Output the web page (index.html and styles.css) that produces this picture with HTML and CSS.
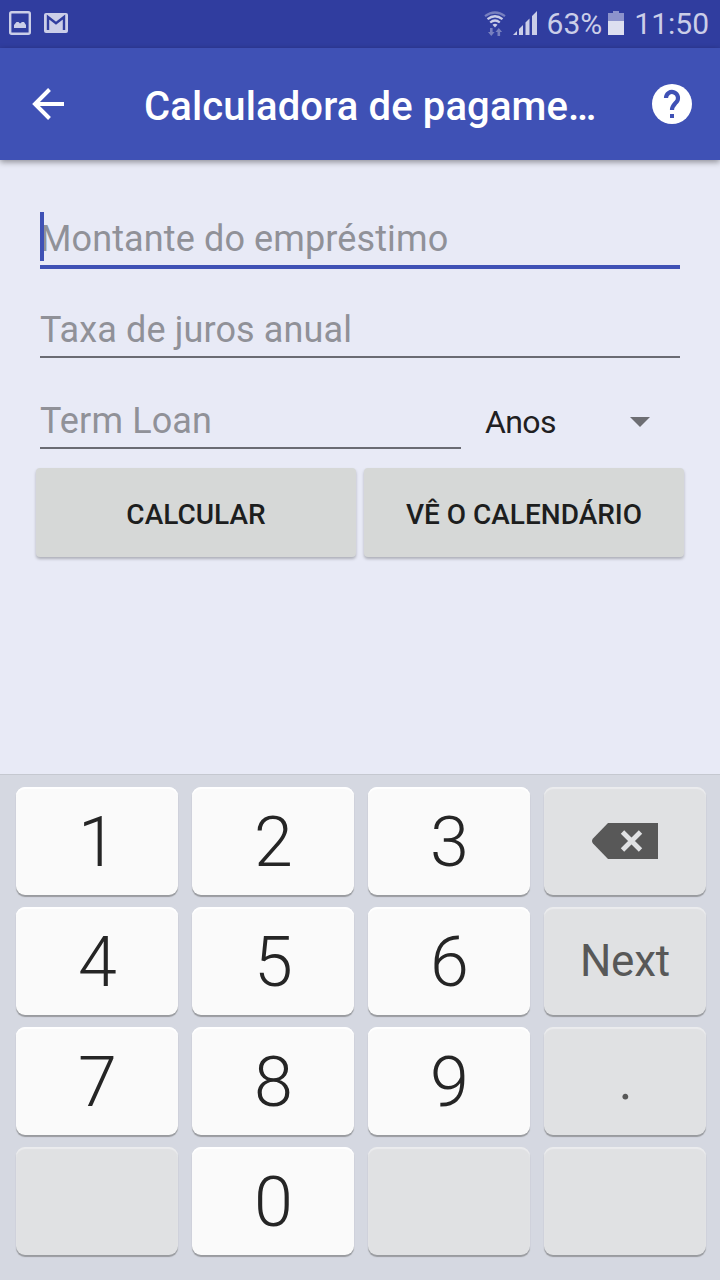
FILE: index.html
```html
<!DOCTYPE html>
<html lang="pt">
<head>
    <meta charset="UTF-8">
    <meta name="viewport" content="width=device-width, initial-scale=1.0">
    <title>Calculadora de pagamentos</title>
    <link rel="stylesheet" href="styles.css">
</head>
<body>
    <div class="status-bar">
        <div class="status-left">
            <svg width="22" height="24" viewBox="0 0 22 24">
                <rect x="1.2" y="1.2" width="19.6" height="21.6" rx="1.5" fill="none" stroke="#cbcee8" stroke-width="2.4"/>
                <path d="M5 17v-3l2.5-3h2l1.500 1.500L13 11h2l2 3v3z" fill="#cbcee8"/>
            </svg>
            <svg width="24" height="20" viewBox="0 0 24 20">
                <rect width="24" height="20" rx="2" fill="#cbcee8"/>
                <path d="M4 17V4l8 6.300L20 4v13" fill="none" stroke="#303d9f" stroke-width="2.4"/>
            </svg>
        </div>
        <div class="status-right">
            <svg class="wifi" width="22" height="26" viewBox="0 0 22 26">
                <g fill="none" stroke-width="2.2">
                    <path d="M1 5.200Q11-2.200 21 5.200" stroke="#7880bf"/>
                    <path d="M3.500 8.200Q11 2.300 18.500 8.200" stroke="#cbcee8"/>
                    <path d="M6.200 11.500Q11 7.500 15.800 11.500" stroke="#cbcee8"/>
                </g>
                <path d="M8.500 13.800Q11 11.800 13.500 13.800L11 16.500z" fill="#cbcee8"/>
                <path d="M6 17h2.600v4h2L7.300 25 4 21h2zM13.500 25h2.600v-4h2L14.800 17l-3.300 4h2z" fill="#7880bf"/>
            </svg>
            <svg class="signal" width="24" height="24" viewBox="0 0 24 24">
                <path d="M0 24L4 20v4zM6 18l4-4v10H6zM12.500 11.500l4-4V24h-4zM19 5l5-5v24h-5z" fill="#cbcee8"/>
            </svg>
            <span class="percent">63%</span>
            <svg class="battery" width="16" height="24" viewBox="0 0 16 24">
                <path d="M0 2h5V0h6v2h5v8H0z" fill="#8c93cc"/>
                <path d="M0 10h16v14H0z" fill="#dddff0"/>
            </svg>
            <span>11:50</span>
        </div>
    </div>

    <header class="toolbar">
        <svg width="32" height="32" viewBox="0 0 32 32">
            <path d="M17.500 1.500L3 16l14.500 14.500M3 16h29" fill="none" stroke="#fff" stroke-width="4"/>
        </svg>
        <h1>Calculadora de pagame…</h1>
        <svg width="40" height="40" viewBox="0 0 40 40">
            <circle cx="20" cy="20" r="20" fill="#fff"/>
            <path d="M14 14a6 6 0 1 1 10.300 4.200C22 20.800 20 22 20 26" fill="none" stroke="#3f51b5" stroke-width="4.200"/>
            <path d="M18 30h4v4h-4z" fill="#3f51b5"/>
        </svg>
    </header>

    <main class="form">
        <div class="field focused">
            <input type="text" placeholder="Montante do empréstimo">
            <span class="caret"></span>
        </div>
        <div class="field">
            <input type="text" placeholder="Taxa de juros anual">
        </div>
        <div class="term-row">
            <div class="field">
                <input type="text" placeholder="Term Loan">
            </div>
            <div class="spinner">
                <span>Anos</span>
                <svg width="20" height="10" viewBox="0 0 20 10"><path d="M0 0h20L10 10z" fill="#6d6e73"/></svg>
            </div>
        </div>
        <div class="buttons">
            <button>CALCULAR</button>
            <button>VÊ O CALENDÁRIO</button>
        </div>
    </main>

    <div class="keyboard">
        <div class="key">1</div>
        <div class="key">2</div>
        <div class="key">3</div>
        <div class="key gray">
            <svg width="66" height="36" viewBox="0 0 66 36">
                <path d="M16 0h50v36H16L1 20.500Q-1 18 1 15.500z" fill="#585858"/>
                <path d="M30.500 9l18 18M48.500 9l-18 18" stroke="#e0e1e3" stroke-width="4.800"/>
            </svg>
        </div>
        <div class="key">4</div>
        <div class="key">5</div>
        <div class="key">6</div>
        <div class="key gray next">Next</div>
        <div class="key">7</div>
        <div class="key">8</div>
        <div class="key">9</div>
        <div class="key gray dot">.</div>
        <div class="key gray"></div>
        <div class="key">0</div>
        <div class="key gray"></div>
        <div class="key gray"></div>
    </div>
</body>
</html>
```
FILE: styles.css
```css
* {
    box-sizing: border-box;
}
body {
    margin: 0;
    width: 720px;
    height: 1280px;
    display: flex;
    flex-direction: column;
    overflow: hidden;
    background-color: #e8eaf6;
    font-family: Roboto, sans-serif;
}
svg {
    display: block;
    flex: none;
}
.status-bar {
    height: 48px;
    padding: 0 11px 0 9px;
    display: flex;
    justify-content: space-between;
    align-items: center;
    background-color: #303d9f;
    color: #cbcee8;
    font-size: 30px;
    line-height: 48px;
}
.status-left, .status-right {
    display: flex;
    align-items: center;
}
.status-left {
    gap: 13px;
    padding-bottom: 2px;
}
.wifi {
    margin-right: 7px;
}
.signal {
    margin: 0 10px 2px 0;
}
.battery {
    margin: 0 10px 2px 6px;
}
.toolbar {
    height: 112px;
    padding: 0 28px 0 32px;
    display: flex;
    align-items: center;
    background-color: #3f51b5;
    color: #fff;
    box-shadow: 0 2px 6px rgba(0, 0, 0, 0.4);
}
.toolbar h1 {
    flex: 1;
    margin: 4px 0 0 80px;
    font-size: 40px;
    font-weight: 500;
    letter-spacing: 0.13px;
    white-space: nowrap;
}
.form {
    flex: 1;
    padding: 47px 36px 0;
}
.field {
    position: relative;
    height: 91px;
    margin: 0 4px;
}
.field input {
    display: block;
    width: 100%;
    height: 60px;
    padding: 6px 0 0;
    border: 0;
    border-bottom: 2px solid #6a6b73;
    border-radius: 0;
    outline: none;
    background: none;
    font-family: inherit;
    font-size: 36px;
    letter-spacing: 0.12px;
}
.field input::placeholder {
    color: #909198;
    opacity: 1;
}
.focused input {
    height: 62px;
    border-bottom: 4px solid #3f51b5;
}
.caret {
    position: absolute;
    left: 0;
    top: 5px;
    width: 4px;
    height: 49px;
    background-color: #3f51b5;
}
.term-row {
    display: flex;
    height: 79px;
}
.term-row .field {
    width: 421px;
    margin-right: 24px;
}
.spinner {
    flex: 1;
    height: 66px;
    padding-right: 34px;
    display: flex;
    justify-content: space-between;
    align-items: center;
    color: #1f2022;
    font-size: 32px;
    letter-spacing: -0.6px;
}
.buttons {
    display: flex;
    gap: 8px;
}
.buttons button {
    width: 320px;
    height: 89px;
    padding: 3px 0 0;
    border: 0;
    border-radius: 4px;
    background-color: #d6d8d7;
    color: #1d1e1e;
    font-family: inherit;
    font-size: 28px;
    font-weight: 500;
    box-shadow: 0 2px 3px rgba(0, 0, 0, 0.25);
}
.keyboard {
    height: 506px;
    padding: 12px 14px 0 16px;
    display: grid;
    grid-template-columns: repeat(4, 162px);
    grid-auto-rows: 108px;
    gap: 12px 14px;
    border-top: 1px solid #c5c8d0;
    background-color: #d5d8e1;
}
.key {
    display: flex;
    justify-content: center;
    align-items: center;
    padding: 2px 0 0 1px;
    border-radius: 9px;
    background-color: #fafafa;
    color: #252525;
    font-size: 70px;
    font-weight: 300;
    box-shadow: 0 2px 1px #999b9f, inset 0 2px 1px #fff;
}
.gray {
    padding: 0;
    background-color: #e0e1e3;
    color: #585858;
    font-size: 44px;
    font-weight: 400;
    box-shadow: 0 2px 1px #999b9f, inset 0 2px 1px #ebecee;
}
.next {
    letter-spacing: -0.2px;
}
.dot {
    padding-left: 1px;
    font-size: 52px;
}
```
